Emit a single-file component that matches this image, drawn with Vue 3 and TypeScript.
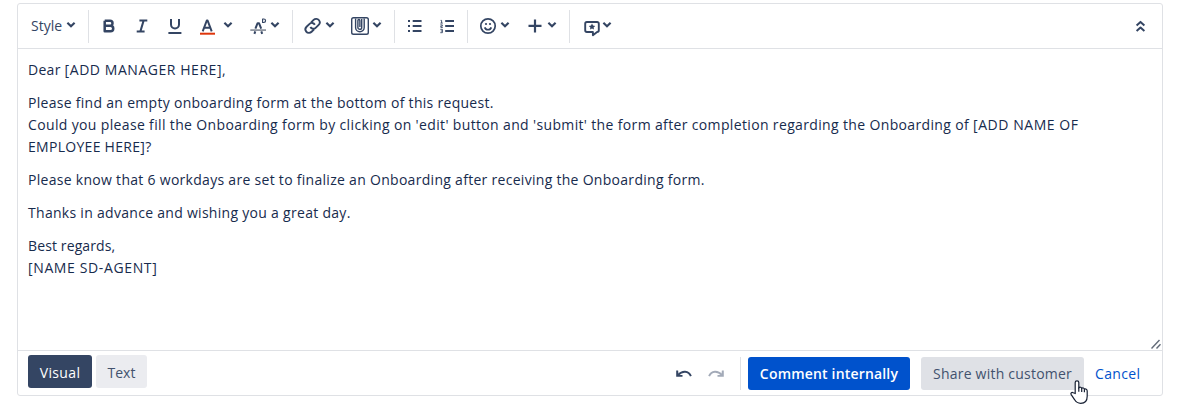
<script setup lang="ts">
interface Tool {
  name: string
  menu: boolean
}

const groups: Tool[][] = [
  [
    { name: 'bold', menu: false },
    { name: 'italic', menu: false },
    { name: 'underline', menu: false },
    { name: 'color', menu: true },
    { name: 'clear', menu: true },
  ],
  [
    { name: 'link', menu: true },
    { name: 'attach', menu: true },
  ],
  [
    { name: 'bullets', menu: false },
    { name: 'numbers', menu: false },
  ],
  [
    { name: 'emoji', menu: true },
    { name: 'insert', menu: true },
  ],
  [{ name: 'canned', menu: true }],
]
</script>

<template>
  <main class="page">
    <section class="editor">
      <header class="toolbar">
        <button class="tool style-tool">
          <span class="style-label">Style</span>
          <svg class="chevron" viewBox="0 0 10 8"><path d="M1.4 1.8 5 5.2 8.6 1.8" /></svg>
        </button>
        <div v-for="(group, g) in groups" :key="g" class="group">
          <button v-for="tool in group" :key="tool.name" class="tool" :class="tool.name">
            <svg class="icon" viewBox="0 0 20 24">
              <g v-if="tool.name === 'bold'" class="line heavy">
                <path d="M5.700 6.800H11a2.500 2.500 0 0 1 0 5H5.700M11 11.800h.5a2.750 2.750 0 0 1 0 5.500H5.700V6.800" />
              </g>
              <g v-else-if="tool.name === 'italic'" class="line">
                <path d="M7.400 6.600H15.300M4.700 17.400h7.900M11.600 6.600 8.400 17.400" />
              </g>
              <g v-else-if="tool.name === 'underline'" class="line">
                <path d="M6 5v5.400a4 4 0 0 0 8 0V5M3.400 18.900h13" />
              </g>
              <g v-else-if="tool.name === 'color'">
                <path class="line" d="M5.700 17.400 9.800 6.500h.8l4.100 10.900M7.200 13.700h6" />
                <path class="swatch" d="M3 18.700h15v2H3z" />
              </g>
              <g v-else-if="tool.name === 'clear'">
                <path class="line" d="M7.400 14.600 9.600 9.200h1.400l2.200 5.400M7.300 17.300l-.9 2.500M13.300 17.300l.9 2.500" />
                <path class="line hair" d="M14.600 5v3.500h1.200a1.750 1.750 0 0 0 0-3.500z" />
                <path class="strike" d="M2.300 15.200H18v1.800H2.300z" />
              </g>
              <g v-else-if="tool.name === 'link'" class="line thin" transform="translate(-.7 -1.600) scale(1.120)">
                <path d="M8.800 8.900 11 6.700a3.200 3.200 0 0 1 4.800.3 3.200 3.200 0 0 1-.3 4.200l-2.700 2.600a3 3 0 0 1-4.700-.7" />
                <path d="M11.400 15.200 9.200 17.300a3.200 3.200 0 0 1-4.800-.2 3.200 3.200 0 0 1 .3-4.300l2.700-2.600a3 3 0 0 1 4.700.8" />
              </g>
              <g v-else-if="tool.name === 'attach'" class="line clip">
                <rect x="1.700" y="3.700" width="16.600" height="16.600" rx="1.800" />
                <path d="M5.600 4.500v9a4.300 4.300 0 0 0 8.600 0V4.500M11.700 5v8.400a1.900 1.900 0 0 1-3.800 0V6.500a1 1 0 0 1 2 0V13" />
              </g>
              <g v-else-if="tool.name === 'bullets'" class="line">
                <path d="M3 7h2M3 12h2M3 17h2M7.700 7h8.800M7.700 12h8.800M7.700 17h8.800" />
              </g>
              <g v-else-if="tool.name === 'numbers'">
                <path class="line" d="M8.200 7H17M8.200 12H17M8.200 17H17" />
                <path class="line digits" d="M3.600 6.400h1V9M3.400 9.100h2.400M3.300 10.900h2v1.200H3.800v1.300h2M3.300 15.300h2.100v3.400H3.300M3.800 17h1.500" />
              </g>
              <g v-else-if="tool.name === 'emoji'">
                <circle class="line thin" cx="10" cy="12" r="7.200" />
                <path class="line thin" d="M6.700 13.400a3.500 3.500 0 0 0 6.600 0" />
                <circle class="dot" cx="8" cy="10" r="1.100" />
                <circle class="dot" cx="12" cy="10" r="1.100" />
              </g>
              <g v-else-if="tool.name === 'insert'" class="line plus">
                <path d="M10 5.400v13M3.500 11.900h13" />
              </g>
              <g v-else>
                <path class="line bubble" d="M4.900 8h10.200a1.700 1.700 0 0 1 1.700 1.700v6.600a1.700 1.700 0 0 1-1.700 1.700l-4.200 3.200V18h-6a1.700 1.700 0 0 1-1.700-1.700V9.700A1.700 1.700 0 0 1 4.900 8z" />
                <path class="dot" d="m10 9.600 1 2 2.200.3-1.600 1.500.4 2.200-2-1-2 1 .4-2.200-1.600-1.500 2.200-.3z" />
              </g>
            </svg>
            <svg v-if="tool.menu" class="chevron" viewBox="0 0 10 8"><path d="M1.400 1.800 5 5.200 8.600 1.800" /></svg>
          </button>
        </div>
        <button class="tool collapse">
          <svg class="icon" viewBox="0 0 20 24">
            <path class="line" d="m6.600 11.400 3.900-3.500 3.900 3.500M6.600 17l3.900-3.500 3.900 3.500" />
          </svg>
        </button>
      </header>

      <article class="body">
        <p><span class="snug">Dear </span><span class="caps">[ADD MANAGER HERE],</span></p>
        <p>
          <span class="snug">Please find an empty onboarding form at the bottom of this request.</span><br />
          <span class="roomy">Could you please fill the Onboarding form by clicking on 'edit' button and 'submit' the form after completion regarding the Onboarding of </span><span class="caps">[ADD NAME OF</span><br />
          <span class="snug">EMPLOYEE HERE]?</span>
        </p>
        <p><span class="snug">Please know that 6 workdays are set to finalize an Onboarding after receiving the Onboarding form.</span></p>
        <p><span class="snug">Thanks in advance and wishing you a great day.</span></p>
        <p><span class="close">Best regards,</span><br /><span class="caps wide">[NAME SD-AGENT]</span></p>
        <svg class="grip" viewBox="0 0 10 10"><path d="M.5 9.500 8.500 1M5.500 9.500l4-4.300" /></svg>
      </article>

      <footer class="footer">
        <button class="mode active">Visual</button>
        <button class="mode">Text</button>
        <div class="history">
          <svg class="turn" viewBox="0 0 16 8">
            <path class="arc" d="M2.200 4.900C6 .6 12.600.3 14.900 6.200" />
            <path class="head" d="M.2.500v6.300h6.300V5.100H2.600L2.100.5z" />
          </svg>
          <svg class="turn redo" viewBox="0 0 16 8">
            <path class="arc" d="M2.200 4.900C6 .6 12.600.3 14.900 6.200" />
            <path class="head" d="M.2.500v6.300h6.300V5.100H2.600L2.100.5z" />
          </svg>
        </div>
        <button class="action primary">Comment internally</button>
        <button class="action share">
          Share with customer
          <svg class="pointer" viewBox="0 0 18 24">
            <path d="M5.200 13.500V2.600a1.800 1.800 0 0 1 3.600 0v5.200c1.100-1 2.500-.6 2.900.5 1-.7 2.300-.3 2.700.8 1.300-.5 2.800.2 2.800 1.800v5.300c0 4.300-2.400 7.100-6.500 7.100-3 0-4.700-1.300-6-3.500L1.200 14.600c-.9-1.700.7-2.800 2.100-1.800z" />
            <path class="creases" d="M8.800 7.500v4.300M11.700 8.300V12M14.400 9.200V12.200" />
          </svg>
        </button>
        <button class="cancel">Cancel</button>
      </footer>
    </section>
  </main>
</template>

<style>
body {
  background: #fff;
}
</style>

<style scoped>
.page {
  box-sizing: border-box;
  width: 1180px;
  height: 413px;
  padding: 3px 17px 17px;
  background: #fff;
  color: #172b4d;
  font: 14px/22px "Open Sans", "Noto Sans", sans-serif;
}
.editor {
  box-sizing: border-box;
  display: flex;
  flex-direction: column;
  width: 1146px;
  height: 393px;
  border: 1px solid #dfe1e5;
  border-radius: 3px;
}
button {
  margin: 0;
  padding: 0;
  border: 0;
  background: none;
  color: inherit;
  font: inherit;
  white-space: nowrap;
}
.toolbar {
  display: flex;
  align-items: center;
  height: 44px;
  border-bottom: 1px solid #dfe1e5;
  color: #344563;
}
.group {
  box-sizing: border-box;
  display: flex;
  align-items: center;
  height: 33px;
  border-left: 1px solid #dfe1e5;
}
.tool {
  display: flex;
  align-items: center;
  height: 24px;
  flex: none;
}
.style-tool {
  width: 70px;
  box-sizing: border-box;
  padding-left: 13px;
}
.style-label {
  width: 35px;
  text-align: left;
}
.icon {
  display: block;
  width: 20px;
  height: 24px;
}
.chevron {
  display: block;
  width: 10px;
  height: 8px;
  margin-top: -2px;
  fill: none;
  stroke: #344563;
  stroke-width: 2.2;
}
.line {
  fill: none;
  stroke: #344563;
  stroke-width: 2;
  stroke-linecap: butt;
  stroke-linejoin: round;
}
.heavy { stroke-width: 2.5; }
.thin { stroke-width: 1.7; }
.hair { stroke-width: 1.2; }
.clip { stroke-width: 1.4; }
.plus { stroke-width: 2.2; }
.bubble { stroke-width: 1.9; }
.digits { stroke-width: 0.9; }
.dot { fill: #344563; }
.swatch { fill: #de350b; }
.strike { fill: #8f959f; }
.bold { margin-left: 10px; }
.italic { margin-left: 13px; }
.underline { margin-left: 13px; }
.color { margin-left: 12px; }
.color .chevron { margin-left: 6px; }
.clear { margin: 0 12px 0 15px; }
.clear .chevron { margin-left: 2px; }
.link { margin-left: 9px; }
.link .chevron { margin-left: 3px; }
.attach { margin: 0 12px 0 15px; }
.attach .chevron { margin-left: 2px; }
.bullets { margin-left: 10px; }
.numbers { margin: 0 10px 0 12px; }
.emoji { margin-left: 10px; }
.emoji .chevron { margin-left: 2px; }
.insert { margin: 0 12px 0 15px; }
.insert .chevron { margin-left: 2px; }
.canned { margin-left: 12px; }
.collapse { margin: 0 12px 0 auto; }
.body {
  position: relative;
  box-sizing: border-box;
  flex: 1;
  padding: 10px;
  border-bottom: 1px solid #dfe1e5;
}
.body p {
  margin: 0 0 11px;
  white-space: nowrap;
}
.close { letter-spacing: 0.12px; }
.snug { letter-spacing: 0.29px; }
.roomy { letter-spacing: 0.352px; }
.caps { letter-spacing: 0.55px; }
.wide { letter-spacing: 0.63px; }
.grip {
  position: absolute;
  right: 1px;
  bottom: 1px;
  width: 10px;
  height: 10px;
  fill: none;
  stroke: #626b78;
  stroke-width: 1.4;
}
.footer {
  box-sizing: border-box;
  display: flex;
  align-items: flex-start;
  height: 44px;
  padding: 4px 10px 0;
}
.mode {
  box-sizing: border-box;
  width: 51px;
  height: 33px;
  padding-top: 2px;
  border-radius: 3px;
  background: #ebecf0;
  color: #42526e;
}
.mode.active {
  width: 64px;
  margin-right: 4px;
  background: #344563;
  color: #fff;
  font-weight: 500;
  letter-spacing: 0.35px;
}
.history {
  box-sizing: border-box;
  display: flex;
  gap: 16px;
  height: 33px;
  margin: 2px 7px 0 auto;
  padding: 13px 16px 0 0;
  border-right: 1px solid #dfe1e5;
}
.turn {
  width: 16px;
  height: 8px;
  fill: #344563;
}
.arc {
  fill: none;
  stroke: #344563;
  stroke-width: 1.9;
}
.redo {
  transform: scaleX(-1);
  opacity: 0.45;
}
.action {
  height: 33px;
  margin-top: 2px;
  border-radius: 3px;
}
.primary {
  width: 162px;
  background: #0052cc;
  color: #fff;
  font-weight: 600;
  letter-spacing: 0.18px;
}
.share {
  position: relative;
  width: 163px;
  margin-left: 11px;
  background: #dfe1e6;
  color: #42526e;
  letter-spacing: 0.22px;
}
.pointer {
  position: absolute;
  left: 149px;
  top: 23px;
  width: 18px;
  height: 24px;
  fill: #fff;
  stroke: #172033;
  stroke-width: 1.2;
}
.creases { fill: none; }
.cancel {
  height: 33px;
  margin: 2px 12px 0 11px;
  width: 45px;
  color: #0052cc;
  letter-spacing: 0.35px;
}
</style>
